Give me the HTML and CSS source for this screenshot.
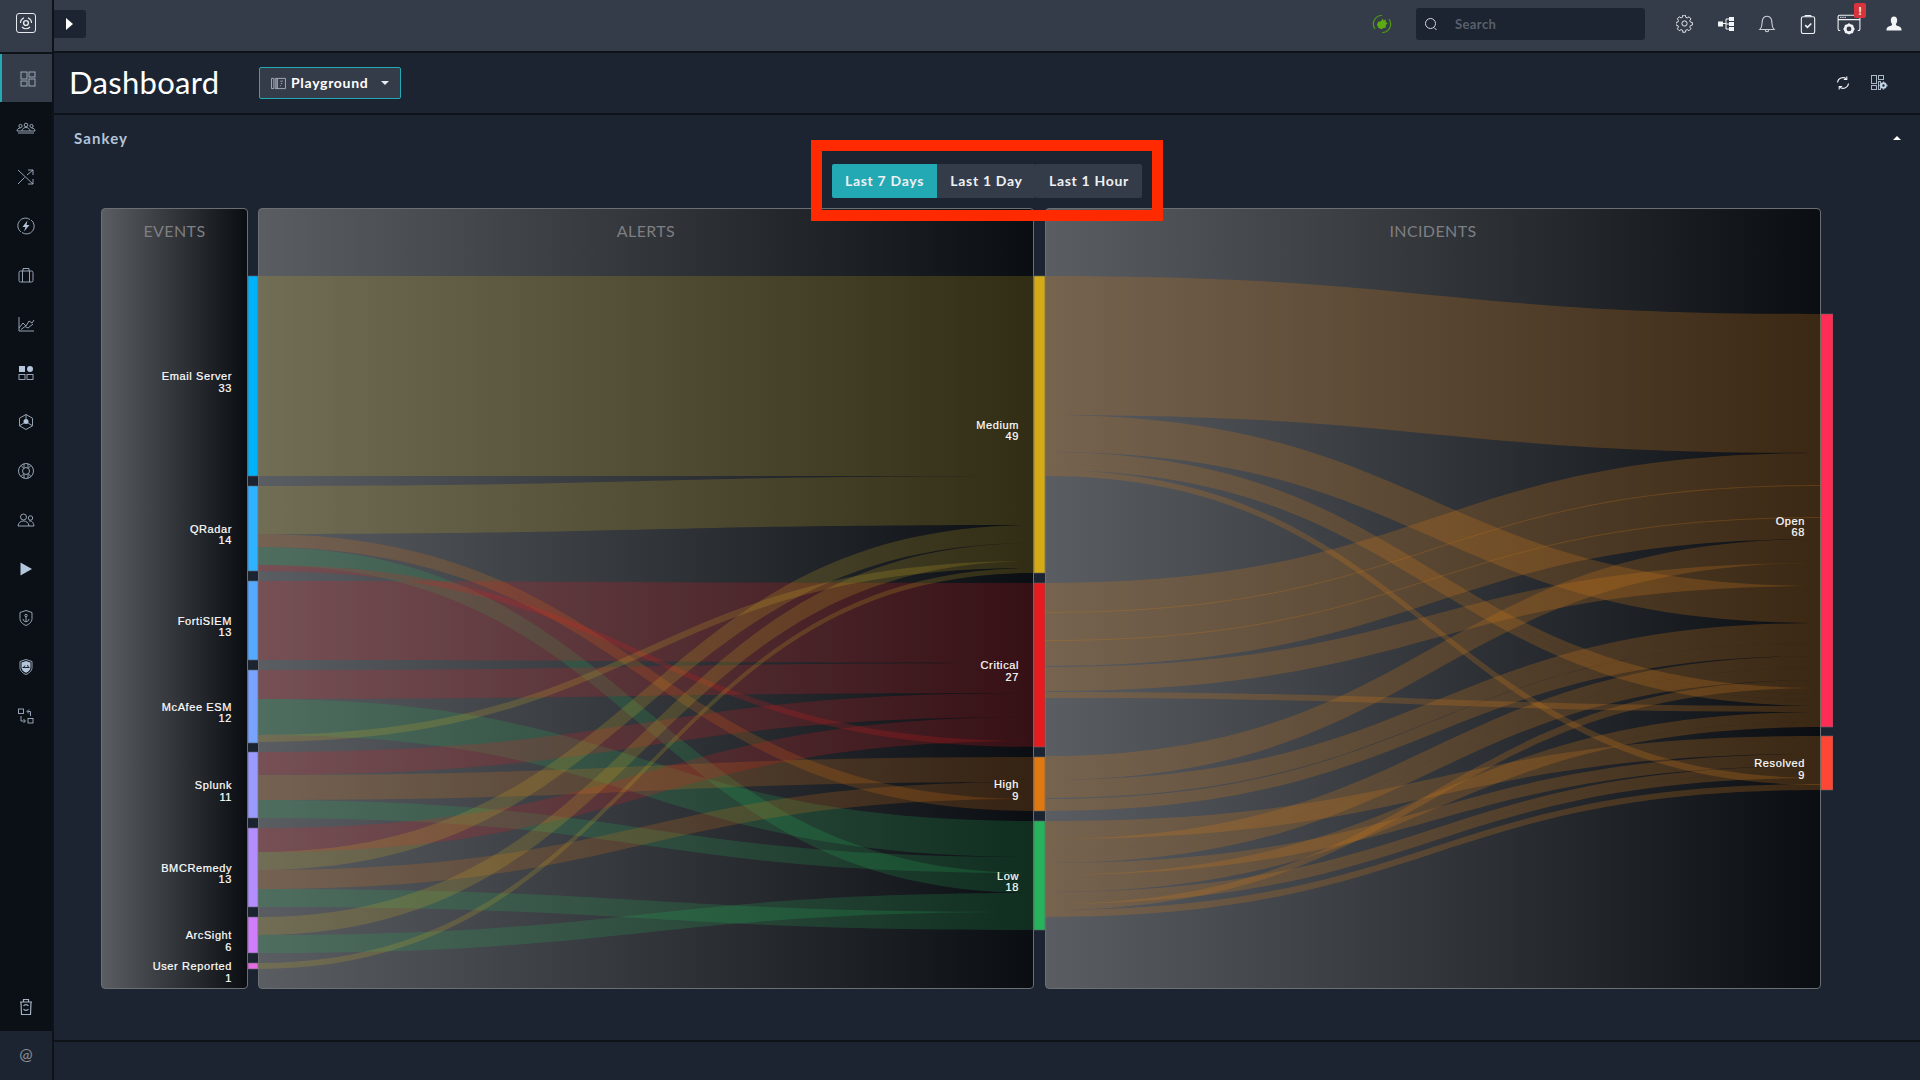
FILE: index.html
```html
<!DOCTYPE html>
<html lang="en">
<head>
    <meta charset="UTF-8" />
    <title>Dashboard</title>
    <link rel="stylesheet" href="styles.css">
</head>
<body>
    <aside class="sidebar">
        <div class="logo">
            <svg width="20" height="20" viewBox="0 0 20 20" fill="none" stroke="#e6e9ee" stroke-width="1">
                <rect x="0.5" y="0.5" width="19" height="19" rx="2.5" />
                <path d="M4.5 10a5.5 5.5 0 0 1 3.5-5.1M12 4.9a5.5 5.5 0 0 1 3.5 5.1M14 14a5.5 5.5 0 0 1-8 0" stroke-width="1.2" />
                <circle cx="10" cy="10" r="2.4" stroke-width="1.4" />
            </svg>
        </div>
        <nav class="nav">
            <a class="nav-item active">
                <svg class="nav-icon" viewBox="0 0 20 20"><rect x="3" y="3" width="6" height="7" /><rect x="11" y="3" width="6" height="5" /><rect x="3" y="12" width="6" height="5" /><rect x="11" y="10" width="6" height="7" /></svg>
            </a>
            <a class="nav-item">
                <svg class="nav-icon" viewBox="0 0 20 20"><circle cx="4.5" cy="8" r="1.6" /><circle cx="10" cy="7" r="1.8" /><circle cx="15.5" cy="8" r="1.6" /><path d="M1 13c0-2 1.5-3 3.5-3M19 13c0-2-1.500-3-3.500-3M6 13c0-2 1.700-3.500 4-3.500s4 1.500 4 3.500M1 13h18M2 15h16" /></svg>
            </a>
            <a class="nav-item">
                <svg class="nav-icon" viewBox="0 0 20 20"><path d="M2 3l15 14M17 17v-5M17 17h-5M2 17L8.500 10.500M11 8l6-5M17 3h-5M17 3v5" /></svg>
            </a>
            <a class="nav-item">
                <svg class="nav-icon" viewBox="0 0 20 20"><path d="M5 16a7.500 7.500 0 0 1 9-12.500M15 4a7.500 7.500 0 0 1-9 12.500" /><path class="solid" d="M11.500 4.500L6.500 11h3l-1.500 4.500L13.500 9h-3z" /></svg>
            </a>
            <a class="nav-item">
                <svg class="nav-icon" viewBox="0 0 20 20"><rect x="3" y="6" width="14" height="11" rx="1.500" /><path d="M7 6V3.500h6V6M6.500 6v11M13.500 6v11" /></svg>
            </a>
            <a class="nav-item">
                <svg class="nav-icon" viewBox="0 0 20 20"><path d="M3 3v14h15M3 14l4-5 3 3 3-5 3 2 2-3M5 15.500l4-3 3 1.500 5-4" /></svg>
            </a>
            <a class="nav-item">
                <svg class="nav-icon" viewBox="0 0 20 20"><rect class="solid" x="3" y="3" width="6" height="6" /><circle class="solid" cx="14" cy="6" r="3" /><rect x="3" y="11.500" width="6" height="5" /><rect x="11" y="11.500" width="6" height="5" /></svg>
            </a>
            <a class="nav-item">
                <svg class="nav-icon" viewBox="0 0 20 20"><path d="M10 2.500l6.500 3.700v7.600L10 17.500l-6.500-3.700V6.200z" /><circle class="solid" cx="10" cy="9.500" r="2.500" /><path d="M10 2.500v5M3.500 13.800l4.500-2.800M16.500 13.800L12 11" /></svg>
            </a>
            <a class="nav-item">
                <svg class="nav-icon" viewBox="0 0 20 20"><circle cx="10" cy="10" r="7.500" /><circle cx="10" cy="10" r="3.500" /><path d="M5 4.500l3 3M15 4.500l-3 3M5 15.500l3-3M15 15.500l-3-3M8 2.800v3.700M12 2.800v3.700M8 13.500v3.700M12 13.500v3.700" /></svg>
            </a>
            <a class="nav-item">
                <svg class="nav-icon" viewBox="0 0 20 20"><circle cx="7.500" cy="7" r="3" /><circle cx="14.500" cy="8" r="2.200" /><path d="M2 16c.5-3.500 2.500-5 5.500-5s5 1.500 5.500 5zM13 11c2.800-.5 4.500 1.500 5 5h-5" /></svg>
            </a>
            <a class="nav-item">
                <svg class="nav-icon" viewBox="0 0 20 20"><path class="solid" d="M4.500 3.500L16 10 4.500 16.500z" /></svg>
            </a>
            <a class="nav-item">
                <svg class="nav-icon" viewBox="0 0 20 20"><path d="M10 2.500l6 2v6c0 3.500-3 5.800-6 7-3-1.200-6-3.500-6-7v-6z" /><circle cx="10" cy="7.500" r="1.200" /><path d="M10 8.700v5M7 11c.3 1.700 1.500 2.700 3 2.700s2.700-1 3-2.700" /></svg>
            </a>
            <a class="nav-item">
                <svg class="nav-icon" viewBox="0 0 20 20"><path d="M10 2.500l6 2v6c0 3.500-3 5.800-6 7-3-1.200-6-3.500-6-7v-6z" /><path class="solid" d="M5.500 5.500L10 4l4.500 1.500v5c0 2.500-2.200 4.300-4.500 5.300-2.300-1-4.500-2.800-4.500-5.300z" /><path class="cut" d="M6.500 10.500h7M9 8.500l-1.500 2M11.500 8l1 2.500" /></svg>
            </a>
            <a class="nav-item">
                <svg class="nav-icon" viewBox="0 0 20 20"><rect x="2.500" y="3" width="5" height="4.500" /><rect x="12" y="12.500" width="5" height="4.500" /><path d="M14.500 10V5.500h-3M13 3.500l-2 2 2 2M5 10v5h4M7.500 13l2 2-2 2" /></svg>
            </a>
            <div class="nav-spacer"></div>
            <a class="nav-item nav-item-last">
                <svg class="nav-icon" viewBox="0 0 20 20"><path d="M4 5h12M7.500 5V2.500h5V5M5 5l.5 12.500h9L15 5M7.500 9a3 3 0 0 1 5 0M12.500 12a3 3 0 0 1-5 0" stroke-width="1.200" /></svg>
            </a>
        </nav>
        <div class="side-foot">@</div>
    </aside>

    <main class="main">
        <header class="topbar">
            <button class="toggle"><span class="toggle-arrow"></span></button>
            <div class="topbar-right">
                <svg class="status" width="20" height="20" viewBox="0 0 20 20" fill="none">
                    <path d="M3 15a8.500 8.500 0 0 1 7-13.500M17 5a8.500 8.500 0 0 1-7 13.500" stroke="#4f9a12" stroke-width="1.200" />
                    <path d="M10.500 4.500l1.200 2 2.300-1-.3 2.500 2 1.500-2 1.500.2 2.500-3 .8-1.500 1-3-1.500-1.500-3 1.300-3 2.800-.6z" fill="#5cab12" />
                </svg>
                <div class="search">
                    <svg width="16" height="16" viewBox="0 0 16 16" fill="none" stroke="#d5d9de" stroke-width="1"><circle cx="7.500" cy="7.500" r="5" /><path d="M11 11.500l2.500 2.500" /></svg>
                    <span class="search-text">Search</span>
                </div>
                <a class="top-icon">
                    <svg width="18" height="18" viewBox="0 0 18 18" fill="none" stroke="#e8ebef" stroke-width="1"><path d="M7.500 1.500h3l.4 2.200 1.500.7 1.900-1.200 2 2.200-1.200 1.800.6 1.500 2.100.4v2.800l-2.100.5-.6 1.500 1.200 1.800-2 2-1.900-1.100-1.500.6-.4 2.100h-3" transform="translate(-.7 -1.300) scale(.96)" /><path d="M7.500 1.500l-.4 2.200-1.500.7-1.900-1.200-2 2.200 1.200 1.800-.6 1.500-2.100.4v2.800l2.100.5.6 1.500-1.200 1.800 2 2 1.900-1.100 1.500.6.4 2.100" transform="translate(-.3 -1.300) scale(.96)" /><circle cx="8.500" cy="8.500" r="2.600" /></svg>
                </a>
                <a class="top-icon">
                    <svg width="18" height="18" viewBox="0 0 18 18" fill="#f2f4f6" stroke="none"><rect x="1" y="6.500" width="5" height="5" /><rect x="12" y="2" width="5" height="4" /><rect x="12" y="7" width="5" height="4" /><rect x="12" y="12" width="5" height="4" /><path d="M6 8.500h3M9 4v10M9 4h3M9 9h3M9 14h3" stroke="#f2f4f6" stroke-width="1" fill="none" /></svg>
                </a>
                <a class="top-icon">
                    <svg width="20" height="20" viewBox="0 0 18 18" fill="none" stroke="#c9ced5" stroke-width="1"><path d="M2.500 14c1.500-1.500 2-3 2-5.500C4.500 5 6 2 9 2s4.500 3 4.500 6.500c0 2.500.5 4 2 5.500z" /><path d="M7.500 14.500c0 2 3 2 3 0" /></svg>
                </a>
                <a class="top-icon">
                    <svg width="20" height="20" viewBox="0 0 18 18" fill="none" stroke="#f0f2f5" stroke-width="1"><rect x="3" y="2.500" width="12" height="15" rx="1.500" /><path d="M6.500 2.500v-1h5v1" /><path d="M6.500 10l2 2 3.500-3.500" stroke-width="1.400" /></svg>
                </a>
                <a class="top-icon alert-icon">
                    <svg width="22" height="22" viewBox="0 0 22 22" fill="none" stroke="#f0f2f5" stroke-width="1"><path d="M3 17h-.500A1.500 1.500 0 0 1 1 15.500v-11A1.500 1.500 0 0 1 2.500 3h17A1.500 1.500 0 0 1 21 4.500v11a1.500 1.500 0 0 1-1.500 1.500H19M1 7h20" /><path d="M3 5h1M5 5h1M7 5h1" stroke-width="1.200" /><circle cx="11" cy="15.500" r="3.500" fill="none" stroke-width="2.500" /><path d="M11 10.500v1.500M11 19v1.500M6 15.500h1.500M14.500 15.500H16M7.500 12l1 1M14.500 19l-1-1M14.500 12l-1 1M7.500 19l1-1" stroke-width="1.800" /></svg>
                    <span class="badge">!</span>
                </a>
                <a class="top-icon user-icon">
                    <svg width="18" height="18" viewBox="0 0 18 18" fill="#f2f4f6"><path d="M9 1.500c2 0 3.200 1.500 3.200 3.700 0 1.500-.5 2.800-1.300 3.800 0 1 .5 1.600 2 2.100 2 .7 3.600 1.500 3.600 3.400v1H1.500v-1c0-1.900 1.600-2.700 3.600-3.400 1.500-.5 2-1.100 2-2.100-.8-1-1.300-2.300-1.300-3.800C5.800 3 7 1.500 9 1.500z" /></svg>
                </a>
            </div>
        </header>

        <div class="page-head">
            <h1>Dashboard</h1>
            <button class="select">
                <svg width="15" height="13" viewBox="0 0 16 14" fill="none" stroke="#a9b0ba" stroke-width="1"><path d="M.5 1.500h2.500v11H.5zM4.500 1.500h2v11h-2zM6.500 1.500h9v11h-9z" /><path d="M10 4.500h2.500M10.500 7h1.500M10 9v1" /></svg>
                <span>Playground</span>
                <span class="caret"></span>
            </button>
            <div class="head-actions">
                <svg width="16" height="16" viewBox="0 0 16 16" fill="none" stroke="#eef0f3" stroke-width="1.100"><path d="M2.500 7.500a5.500 5.500 0 0 1 9-3.500M13.500 8.500a5.500 5.500 0 0 1-9 3.500" /><path d="M11.800 1.500v3h-3M4.200 14.500v-3h3" /></svg>
                <svg width="18" height="18" viewBox="0 0 18 18" fill="none" stroke="#aab8c8" stroke-width="1"><rect x="1.500" y="1.500" width="5" height="8" /><rect x="8.500" y="1.500" width="5" height="4" /><rect x="1.500" y="11.500" width="5" height="4" /><rect x="8.500" y="7.500" width="2" height="8" /><circle cx="13.500" cy="11.500" r="2.200" stroke="#c4d6ea" stroke-width="2" /><path d="M13.500 7.500v1M13.500 14.500v1M9.500 11.500h1M16.500 11.500h1" stroke="#c4d6ea" stroke-width="1.300" /></svg>
            </div>
        </div>

        <section class="widget">
            <div class="widget-title">
                <span>Sankey</span>
                <span class="caret-up"></span>
            </div>
            <div class="range-row">
                <div class="range">
                    <button class="range-btn selected">Last 7 Days</button>
                    <button class="range-btn">Last 1 Day</button>
                    <button class="range-btn">Last 1 Hour</button>
                    <div class="callout"></div>
                </div>
            </div>
            <div class="chart" id="chart">
                <div class="stage stage-events">EVENTS</div>
                <div class="stage stage-alerts">ALERTS</div>
                <div class="stage stage-incidents">INCIDENTS</div>
            </div>
        </section>

        <footer class="footer"></footer>
    </main>

    <script src="script.js"></script>
</body>
</html>
```
FILE: styles.css
```css
* {
    box-sizing: border-box;
}
body {
    margin: 0;
    display: flex;
    height: 100vh;
    overflow: hidden;
    background: #1c2431;
    color: #fff;
    font-family: 'Lato', sans-serif;
}
button {
    font-family: inherit;
    border: none;
    padding: 0;
    color: inherit;
}

/* left rail */
.sidebar {
    width: 54px;
    flex: none;
    display: flex;
    flex-direction: column;
    background: #0b0f16;
    border-right: 2px solid #0e1219;
}
.logo {
    height: 54px;
    flex: none;
    display: flex;
    align-items: center;
    justify-content: center;
    padding-bottom: 6px;
    background: #353c49;
    border-bottom: 2px solid #0e1219;
}
.nav {
    flex: 1;
    display: flex;
    flex-direction: column;
}
.nav-item {
    height: 49px;
    flex: none;
    display: flex;
    align-items: center;
    justify-content: center;
    padding-top: 2px;
}
.nav-item.active {
    height: 48px;
    background: #353c49;
    border-left: 2px solid #22a9b4;
    padding-left: 2px;
}
.nav-item-last {
    padding-top: 0;
}
.nav-spacer {
    flex: 1;
}
.nav-icon {
    width: 20px;
    height: 20px;
    fill: none;
    stroke: #a4b2c4;
    stroke-width: 0.9;
}
.nav-icon .solid {
    fill: #b4c6dc;
    stroke: none;
}
.nav-icon .cut {
    stroke: #0b0f16;
}
.side-foot {
    height: 49px;
    flex: none;
    display: flex;
    align-items: center;
    justify-content: center;
    padding-bottom: 4px;
    background: #1c2431;
    color: #8a8f96;
    font-size: 16px;
}

.main {
    flex: 1;
    min-width: 0;
    display: flex;
    flex-direction: column;
}

/* top bar */
.topbar {
    height: 53px;
    flex: none;
    display: flex;
    align-items: center;
    padding-bottom: 3px;
    background: #353c49;
    border-bottom: 2px solid #0e1219;
}
.toggle {
    width: 32px;
    height: 28px;
    display: flex;
    align-items: center;
    padding-left: 12px;
    background: #1c2431;
    border-radius: 0 3px 3px 0;
}
.toggle-arrow {
    width: 0;
    height: 0;
    border-left: 7px solid #fff;
    border-top: 6.5px solid transparent;
    border-bottom: 6.5px solid transparent;
}
.topbar-right {
    margin-left: auto;
    display: flex;
    align-items: center;
    padding-right: 6px;
}
.status {
    margin-right: 24px;
}
.search {
    width: 229px;
    height: 32px;
    margin-right: 19px;
    display: flex;
    align-items: center;
    gap: 16px;
    padding-left: 7px;
    background: #1c2431;
    border-radius: 3px;
}
.search-text {
    font-size: 13px;
    font-weight: 700;
    letter-spacing: 0.4px;
    color: #59606b;
}
.top-icon {
    position: relative;
    width: 41px;
    height: 32px;
    display: flex;
    align-items: center;
    justify-content: center;
}
.user-icon {
    margin-left: 4px;
}
.alert-icon svg {
    width: 24px;
    height: 24px;
}
.badge {
    position: absolute;
    top: -5px;
    right: 3px;
    width: 12px;
    height: 15px;
    background: #d9343e;
    border-radius: 2px;
    font-size: 11px;
    font-weight: 900;
    line-height: 15px;
    text-align: center;
}

/* dashboard heading */
.page-head {
    height: 62px;
    flex: none;
    display: flex;
    align-items: center;
    padding: 0 0 0 15px;
    border-bottom: 2px solid #0e1219;
}
h1 {
    width: 190px;
    margin: 0 0 2px;
    font-size: 31px;
    font-weight: 400;
    letter-spacing: 0.3px;
}
.select {
    width: 142px;
    height: 32px;
    display: flex;
    align-items: center;
    padding-left: 11px;
    background: #353c49;
    border: 1px solid #22a9b4;
    border-radius: 2px;
    font-size: 14px;
    font-weight: 700;
    letter-spacing: 0.7px;
}
.select span:first-of-type {
    margin-left: 5px;
    padding-bottom: 2px;
}
.caret {
    margin-left: 13px;
    width: 0;
    height: 0;
    border-top: 4px solid #e8ebef;
    border-left: 4px solid transparent;
    border-right: 4px solid transparent;
}
.head-actions {
    margin-left: auto;
    display: flex;
    align-items: center;
    gap: 19px;
    padding-right: 32px;
}

/* sankey widget */
.widget {
    flex: 1;
    min-height: 0;
    padding-top: 14px;
}
.widget-title {
    height: 18px;
    display: flex;
    align-items: center;
    justify-content: space-between;
    padding: 0 19px 0 20px;
    font-size: 15px;
    font-weight: 700;
    letter-spacing: 1.1px;
    color: #b4c4d8;
}
.caret-up {
    width: 0;
    height: 0;
    border-bottom: 4px solid #fff;
    border-left: 4px solid transparent;
    border-right: 4px solid transparent;
}
.range-row {
    display: flex;
    justify-content: center;
    margin-top: 17px;
}
.range {
    position: relative;
    display: flex;
}
.range-btn {
    height: 34px;
    width: 99px;
    padding-bottom: 2px;
    background: #353c49;
    font-size: 14px;
    font-weight: 700;
    letter-spacing: 0.7px;
    color: #eef0f3;
    border-radius: 0 2px 2px 0;
}
.range-btn:last-of-type {
    width: 106px;
}
.range-btn.selected {
    width: 105px;
    background: #22a9b4;
    border-radius: 2px 0 0 2px;
}
.callout {
    position: absolute;
    z-index: 5;
    top: -24px;
    bottom: -23px;
    left: -21px;
    right: -21px;
    border: 11px solid #ff2a00;
}
.chart {
    position: relative;
    width: 1732px;
    height: 781px;
    margin: 10px 0 0 47px;
    display: grid;
    grid-template-columns: 147px 10px 776px 11px 776px;
}
.stage {
    padding-top: 13px;
    background: linear-gradient(90deg, #5a5d62, #0a0d12);
    border: 1px solid #6b6e72;
    border-radius: 4px;
    font-size: 16px;
    line-height: 18px;
    letter-spacing: 0.4px;
    text-align: center;
    color: #7d7f82;
}
.stage-events { grid-column: 1; }
.stage-alerts { grid-column: 3; }
.stage-incidents { grid-column: 5; }
.sankey {
    position: absolute;
    top: 0;
    left: 0;
}
.sankey-node {
    stroke: #5f6368;
    stroke-width: 0.6;
}
.sankey-label {
    font-family: 'Liberation Sans', sans-serif;
    font-size: 11px;
    letter-spacing: 0.6px;
    fill: #fff;
    stroke: #fff;
    stroke-width: 0.2;
    text-anchor: end;
}

.footer {
    height: 40px;
    flex: none;
    border-top: 2px solid #0e1219;
}
```
FILE: script.js
```javascript
// Sankey drawn by hand, coordinates are page pixels (see viewBox below)
const NS = 'http://www.w3.org/2000/svg';
const chart = document.getElementById('chart');

const nodes = [
    { name: 'Email Server', value: 33, x: 248, w: 10, gap: 16, y0: 276, y1: 476, color: '#00b2fa' },
    { name: 'QRadar', value: 14, x: 248, w: 10, gap: 16, y0: 486, y1: 571, color: '#2fb2ff' },
    { name: 'FortiSIEM', value: 13, x: 248, w: 10, gap: 16, y0: 581, y1: 660, color: '#55a9ff' },
    { name: 'McAfee ESM', value: 12, x: 248, w: 10, gap: 16, y0: 670, y1: 743, color: '#78a3ff' },
    { name: 'Splunk', value: 11, x: 248, w: 10, gap: 16, y0: 752, y1: 818, color: '#9a9aff' },
    { name: 'BMCRemedy', value: 13, x: 248, w: 10, gap: 16, y0: 828, y1: 907, color: '#b48dff' },
    { name: 'ArcSight', value: 6, x: 248, w: 10, gap: 16, y0: 917, y1: 953, color: '#cf7df8' },
    { name: 'User Reported', value: 1, x: 248, w: 10, gap: 16, y0: 963, y1: 969, color: '#e36ce0' },
    { name: 'Medium', value: 49, x: 1034, w: 11, gap: 15, y0: 276, y1: 573, color: '#d4ab17' },
    { name: 'Critical', value: 27, x: 1034, w: 11, gap: 15, y0: 583, y1: 747, color: '#e61c1f' },
    { name: 'High', value: 9, x: 1034, w: 11, gap: 15, y0: 757, y1: 811, color: '#e07812' },
    { name: 'Low', value: 18, x: 1034, w: 11, gap: 15, y0: 821, y1: 930, color: '#27b35b' },
    { name: 'Open', value: 68, x: 1821, w: 12, gap: 16, y0: 314, y1: 727, color: '#ff2d55' },
    { name: 'Resolved', value: 9, x: 1821, w: 12, gap: 16, y0: 736, y1: 790, color: '#ff4533' }
];

const MEDIUM = '#d0ae23';
const CRITICAL = '#e61c1f';
const HIGH = '#e07812';
const LOW = '#27b35b';
const OUT = '#c8761c';

// [color, y0 left, y1 left, y0 right, y1 right]
const alertLinks = [
    [MEDIUM, 276, 476, 276, 476],
    [MEDIUM, 486, 534, 476, 525],
    [HIGH, 534, 547, 799, 811],
    [LOW, 547, 565, 873, 893],
    [CRITICAL, 565, 571, 741, 747],
    [CRITICAL, 581, 660, 583, 663],
    [CRITICAL, 670, 699, 663, 693],
    [LOW, 699, 735, 821, 857],
    [MEDIUM, 735, 742, 561, 568],
    [CRITICAL, 752, 775, 693, 717],
    [HIGH, 775, 800, 757, 782],
    [LOW, 800, 818, 857, 873],
    [CRITICAL, 828, 852, 717, 741],
    [MEDIUM, 852, 870, 525, 543],
    [HIGH, 870, 889, 782, 799],
    [LOW, 889, 907, 912, 930],
    [MEDIUM, 917, 935, 543, 561],
    [LOW, 935, 953, 893, 912],
    [MEDIUM, 963, 969, 568, 573]
];

const incidentLinks = [
    // from Medium
    [276, 415, 314, 453],
    [415, 452, 586, 623],
    [452, 458, 688, 694],
    [458, 464, 694, 700],
    [464, 470, 700, 706],
    [470, 476, 778, 785],
    // from Critical, small overlaps give the hairlines between bands
    [583, 613, 453, 486],
    [612, 641, 485, 518],
    [640, 666, 517, 539],
    [667, 691, 563, 586],
    [692, 698, 706, 712],
    // from High
    [756, 780, 539, 563],
    [780, 798, 623, 643],
    [799, 811, 643, 656],
    // from Low
    [821, 839, 736, 754],
    [839, 851, 656, 668],
    [851, 863, 668, 680],
    [863, 875, 754, 766],
    [875, 886, 712, 722],
    [886, 892, 722, 727],
    [892, 898, 766, 772],
    [898, 904, 772, 778],
    [904, 910, 680, 688],
    [910, 917, 784, 790]
];

function ribbon(x0, x1, a0, a1, b0, b1) {
    const m = (x0 + x1) / 2;
    return `M${x0} ${a0}C${m} ${a0} ${m} ${b0} ${x1} ${b0}L${x1} ${b1}C${m} ${b1} ${m} ${a1} ${x0} ${a1}Z`;
}

function el(name, attrs) {
    const node = document.createElementNS(NS, name);
    Object.keys(attrs).forEach((key) => node.setAttribute(key, attrs[key]));
    return node;
}

const svg = el('svg', { class: 'sankey', width: 1732, height: 781, viewBox: '101 208 1732 781' });

alertLinks.forEach(([color, a0, a1, b0, b1]) => {
    svg.appendChild(el('path', { d: ribbon(258, 1034, a0, a1, b0, b1), fill: color, 'fill-opacity': 0.2 }));
});
incidentLinks.forEach(([a0, a1, b0, b1]) => {
    svg.appendChild(el('path', { d: ribbon(1045, 1821, a0, a1, b0, b1), fill: OUT, 'fill-opacity': 0.26 }));
});

nodes.forEach((n) => {
    svg.appendChild(el('rect', { class: 'sankey-node', x: n.x, y: n.y0, width: n.w, height: n.y1 - n.y0, fill: n.color }));
    const mid = (n.y0 + n.y1) / 2;
    [n.name, n.value].forEach((line, i) => {
        const text = el('text', { class: 'sankey-label', x: n.x - n.gap, y: mid + 4 + i * 11.5 });
        text.textContent = line;
        svg.appendChild(text);
    });
});

chart.appendChild(svg);
```
